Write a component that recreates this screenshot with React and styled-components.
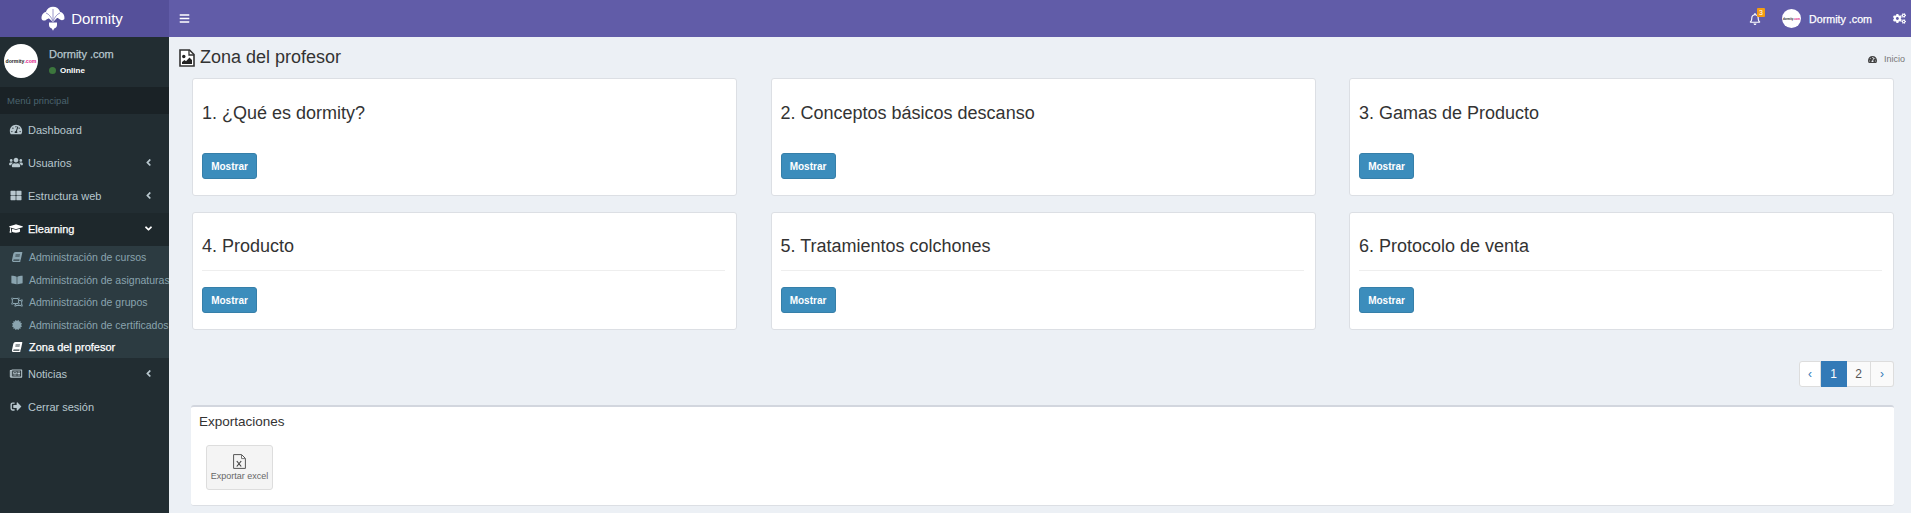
import React from 'react';
import styled, { createGlobalStyle } from 'styled-components';
import {
  FaTachometerAlt, FaUsers, FaThLarge, FaGraduationCap, FaBook, FaBookOpen, FaCertificate,
  FaAngleLeft, FaAngleDown, FaBars, FaCogs, FaSignOutAlt,
  FaRegBell, FaRegNewspaper, FaRegObjectUngroup,
} from 'react-icons/fa';

const GlobalStyle = createGlobalStyle`
  html, body { margin: 0; padding: 0; height: 100%; overflow: hidden; }
  body { font-family: "Liberation Sans", Arial, sans-serif; font-size: 14px; color: #333; background: #ecf0f5; }
  * { box-sizing: border-box; }
`;

const Page = styled.div`
  display: grid;
  grid-template-columns: 169px 1fr;
  grid-template-rows: 37px 476px;
  width: 1911px;
  height: 513px;
  overflow: hidden;
`;

const Logo = styled.div`
  display: flex;
  align-items: center;
  justify-content: center;
  gap: 6px;
  background: #55509a;
  color: #fff;
  font-size: 15px;
  padding-right: 5px;
`;

const Topbar = styled.header`
  display: flex;
  align-items: center;
  background: #615ca8;
  color: #fff;
  padding: 0 5px 0 10px;
`;

const Burger = styled.span`
  display: flex;
  font-size: 11px;
`;

const TopRight = styled.div`
  margin-left: auto;
  display: flex;
  align-items: center;
  font-size: 10.7px;
`;

const Bell = styled.span`
  position: relative;
  display: flex;
  font-size: 12px;
  margin-right: 21px;
`;

const Badge = styled.span`
  position: absolute;
  top: -5px;
  right: -4px;
  width: 8px;
  height: 9px;
  background: #f39c12;
  color: #fff;
  font-size: 7px;
  line-height: 9px;
  text-align: center;
  border-radius: 1px;
`;

const Avatar = styled.span`
  display: flex;
  align-items: center;
  justify-content: center;
  flex: none;
  width: ${p => p.$size}px;
  height: ${p => p.$size}px;
  border-radius: 50%;
  background: #fff;
  color: #222;
  font-size: ${p => p.$size / 6.6}px;
  font-weight: bold;
  overflow: hidden;
  em { color: #e0218a; font-style: normal; }
`;

const TopName = styled.span`
  margin: 0 21px 0 8px;
  -webkit-text-stroke: 0.25px #fff;
`;

const Cogs = styled.span`
  display: flex;
  font-size: 13px;
`;

const Sidebar = styled.aside`
  background: #222d32;
  font-size: 11px;
  color: #b8c7ce;
  overflow: hidden;
`;

const UserPanel = styled.div`
  display: flex;
  height: 50px;
  padding: 7px 0 0 4px;
  gap: 11px;
`;

const UserName = styled.div`
  font-size: 11px;
  margin-top: 4px;
  -webkit-text-stroke: 0.25px #b8c7ce;
`;

const Online = styled.div`
  display: flex;
  align-items: center;
  gap: 4px;
  margin-top: 6px;
  color: #fff;
  font-size: 8px;
  font-weight: bold;
`;

const Dot = styled.span`
  width: 7px;
  height: 7px;
  border-radius: 50%;
  background: #3c763d;
`;

const MenuHeader = styled.div`
  height: 27px;
  line-height: 27px;
  background: #1a2226;
  color: #4b646f;
  font-size: 9.5px;
  padding-left: 7px;
`;

const MenuItem = styled.div`
  display: flex;
  align-items: center;
  height: 33px;
  padding: 0 15px 2px 9px;
  background: ${p => (p.$open ? '#1e282c' : 'transparent')};
  color: ${p => (p.$open ? '#fff' : '#b8c7ce')};
  -webkit-text-stroke: ${p => (p.$open ? '0.25px #fff' : '0')};
  > svg { width: 14px; font-size: 11px; margin-right: 5px; flex: none; }
`;

const Caret = styled.span`
  display: flex;
  margin-left: auto;
  font-size: 11px;
`;

const SubMenu = styled.div`
  background: #2c3b41;
  height: 112px;
`;

const SubItem = styled.div`
  display: flex;
  align-items: center;
  height: 22.5px;
  padding-left: 11px;
  color: ${p => (p.$active ? '#fff' : '#8aa4af')};
  font-size: ${p => (p.$active ? 11 : 10.5)}px;
  -webkit-text-stroke: ${p => (p.$active ? '0.25px #fff' : '0')};
  white-space: nowrap;
  svg { width: 12px; font-size: 10px; margin-right: 6px; flex: none; }
`;

const TiltedBook = styled(FaBook)`
  transform: skewX(-12deg);
`;

const Content = styled.main`
  background: #ecf0f5;
  overflow: hidden;
`;

const TitleRow = styled.div`
  display: flex;
  align-items: center;
  height: 41px;
  padding: 0 10px;
`;

const Title = styled.h1`
  display: flex;
  align-items: center;
  gap: 5px;
  margin: 0;
  font-size: 18px;
  font-weight: 400;
  color: #333;
`;

const Crumb = styled.div`
  display: flex;
  align-items: center;
  gap: 7px;
  margin-left: auto;
  margin-top: 3px;
  margin-right: -4px;
  font-size: 9px;
  color: #777;
  svg { font-size: 9px; color: #444; }
`;

const Cards = styled.div`
  display: grid;
  grid-template-columns: repeat(3, 545px);
  column-gap: 33.5px;
  row-gap: 16px;
  padding-left: 23px;
`;

const Card = styled.section`
  display: flex;
  flex-direction: column;
  height: 118px;
  padding: 0 11px 0 9px;
  background: #fff;
  border: 1px solid #dcdfe4;
  border-radius: 3px;
`;

const CardTitle = styled.h3`
  margin: 0;
  padding: ${p => (p.$rule ? 23 : 24)}px 0 0;
  height: 58px;
  font-size: 18px;
  line-height: 20px;
  font-weight: 400;
  color: #333;
  border-bottom: 1px solid ${p => (p.$rule ? '#eee' : 'transparent')};
`;

const ShowButton = styled.button`
  align-self: flex-start;
  width: 55px;
  height: 26px;
  margin-top: 16px;
  padding: 0;
  background: #3c8dbc;
  border: 1px solid #367fa9;
  border-radius: 3px;
  color: #fff;
  font: bold 10px "Liberation Sans", Arial, sans-serif;
`;

const Pagination = styled.nav`
  display: flex;
  justify-content: flex-end;
  margin: 31px 17px 0 0;
  height: 26px;
`;

const PageLink = styled.span`
  display: flex;
  align-items: center;
  justify-content: center;
  width: ${p => p.$w}px;
  background: ${p => (p.$active ? '#337ab7' : p.$light ? '#fff' : '#fafafa')};
  color: ${p => (p.$active ? '#fff' : p.$arrow ? '#337ab7' : '#555')};
  border: 1px solid ${p => (p.$active ? '#337ab7' : '#ddd')};
  border-left-width: ${p => (p.$first ? 1 : 0)}px;
  border-radius: ${p => (p.$first ? '3px 0 0 3px' : p.$last ? '0 3px 3px 0' : '0')};
  font-size: 12px;
`;

const ExportBox = styled.section`
  height: 101px;
  margin: 18px 17px 0 22px;
  padding: 7px 8px;
  background: #fff;
  border-top: 2px solid #d2d6de;
  border-bottom: 1px solid #dcdfe4;
  border-radius: 3px;
`;

const ExportTitle = styled.h4`
  margin: 0;
  font-size: 13.5px;
  line-height: 16px;
  font-weight: 400;
  color: #333;
`;

const ExportButton = styled.div`
  display: flex;
  flex-direction: column;
  align-items: center;
  justify-content: center;
  gap: 2px;
  width: 67px;
  height: 45px;
  margin: 15px 0 0 7px;
  background: #f4f4f4;
  border: 1px solid #ddd;
  border-radius: 3px;
  color: #666;
  font-size: 9px;
`;

const DormityMark = () => (
  <svg width="24" height="25" viewBox="0 0 24 25">
    <path d="M.6 13C.2 9 2.200 6.500 4.800 6 6 2.500 9 .8 12 .8c3.500 0 6 1.700 7.200 5.200 2.800.5 4.600 3 4.200 7-.8 1.300-3 1.500-4.400.5-1.200-1-2-1.600-3-1.500L12 16l-4-3.500c-1 0-1.800.5-3 1.500-1.400 1-3.600.8-4.400-1z" fill="#fff" />
    <path d="M8 16.500h8v2.500c0 2-1.200 3-2.800 3.600L12 24.800l-1.200-2.200C9.200 22 8 21 8 19z" fill="#fff" />
    <path d="M12 15.500V3M12 15C10 11 8 8 5 7M12 15c2-4 4-7 7-8" stroke="#8f8bc4" strokeWidth="0.900" fill="none" />
  </svg>
);

const DormityBadge = ({ size }) => (
  <Avatar $size={size}>dormity<em>.com</em></Avatar>
);

const FileImageIcon = () => (
  <svg width="16" height="18" viewBox="0 0 16 18">
    <path d="M1 1h9.500L15 5.500V17H1z" fill="#fff" stroke="#333" strokeWidth="1.600" />
    <path d="M10 1v5h5" fill="none" stroke="#333" strokeWidth="1.300" />
    <circle cx="4.800" cy="7.500" r="1.700" fill="#222" />
    <path d="M3 15v-2l2.500-2 1.500 1.200L10.500 8.500 13 11v4z" fill="#222" />
  </svg>
);

const FileExcelIcon = () => (
  <svg width="13" height="15" viewBox="0 0 13 15">
    <path d="M.6.6h8l3.800 3.800v10H.6z" fill="none" stroke="#555" strokeWidth="1" />
    <path d="M8.500.6v4h4" fill="none" stroke="#777" strokeWidth="1" />
    <path d="M3.800 7l4.400 5.500M8.200 7l-4.400 5.500" fill="none" stroke="#444" strokeWidth="1.200" />
  </svg>
);

const courses = [
  { title: '1. ¿Qué es dormity?', rule: false },
  { title: '2. Conceptos básicos descanso', rule: false },
  { title: '3. Gamas de Producto', rule: false },
  { title: '4. Producto', rule: true },
  { title: '5. Tratamientos colchones', rule: true },
  { title: '6. Protocolo de venta', rule: true },
];

const subItems = [
  { icon: <TiltedBook />, label: 'Administración de cursos' },
  { icon: <FaBookOpen />, label: 'Administración de asignaturas' },
  { icon: <FaRegObjectUngroup />, label: 'Administración de grupos' },
  { icon: <FaCertificate />, label: 'Administración de certificados' },
  { icon: <TiltedBook />, label: 'Zona del profesor', active: true },
];

export default function App() {
  return (
    <Page>
      <GlobalStyle />
      <Logo><DormityMark />Dormity</Logo>
      <Topbar>
        <Burger><FaBars /></Burger>
        <TopRight>
          <Bell><FaRegBell /><Badge>3</Badge></Bell>
          <DormityBadge size={19} />
          <TopName>Dormity .com</TopName>
          <Cogs><FaCogs /></Cogs>
        </TopRight>
      </Topbar>
      <Sidebar>
        <UserPanel>
          <DormityBadge size={34} />
          <div>
            <UserName>Dormity .com</UserName>
            <Online><Dot />Online</Online>
          </div>
        </UserPanel>
        <MenuHeader>Menú principal</MenuHeader>
        <MenuItem><FaTachometerAlt />Dashboard</MenuItem>
        <MenuItem><FaUsers />Usuarios<Caret><FaAngleLeft /></Caret></MenuItem>
        <MenuItem><FaThLarge />Estructura web<Caret><FaAngleLeft /></Caret></MenuItem>
        <MenuItem $open><FaGraduationCap />Elearning<Caret><FaAngleDown /></Caret></MenuItem>
        <SubMenu>
          {subItems.map(item => (
            <SubItem key={item.label} $active={item.active}>{item.icon}{item.label}</SubItem>
          ))}
        </SubMenu>
        <MenuItem><FaRegNewspaper />Noticias<Caret><FaAngleLeft /></Caret></MenuItem>
        <MenuItem><FaSignOutAlt />Cerrar sesión</MenuItem>
      </Sidebar>
      <Content>
        <TitleRow>
          <Title><FileImageIcon />Zona del profesor</Title>
          <Crumb><FaTachometerAlt />Inicio</Crumb>
        </TitleRow>
        <Cards>
          {courses.map(course => (
            <Card key={course.title}>
              <CardTitle $rule={course.rule}>{course.title}</CardTitle>
              <ShowButton>Mostrar</ShowButton>
            </Card>
          ))}
        </Cards>
        <Pagination>
          <PageLink $w={22} $first $arrow $light>‹</PageLink>
          <PageLink $w={26} $active>1</PageLink>
          <PageLink $w={24}>2</PageLink>
          <PageLink $w={23} $last $arrow>›</PageLink>
        </Pagination>
        <ExportBox>
          <ExportTitle>Exportaciones</ExportTitle>
          <ExportButton><FileExcelIcon />Exportar excel</ExportButton>
        </ExportBox>
      </Content>
    </Page>
  );
}
